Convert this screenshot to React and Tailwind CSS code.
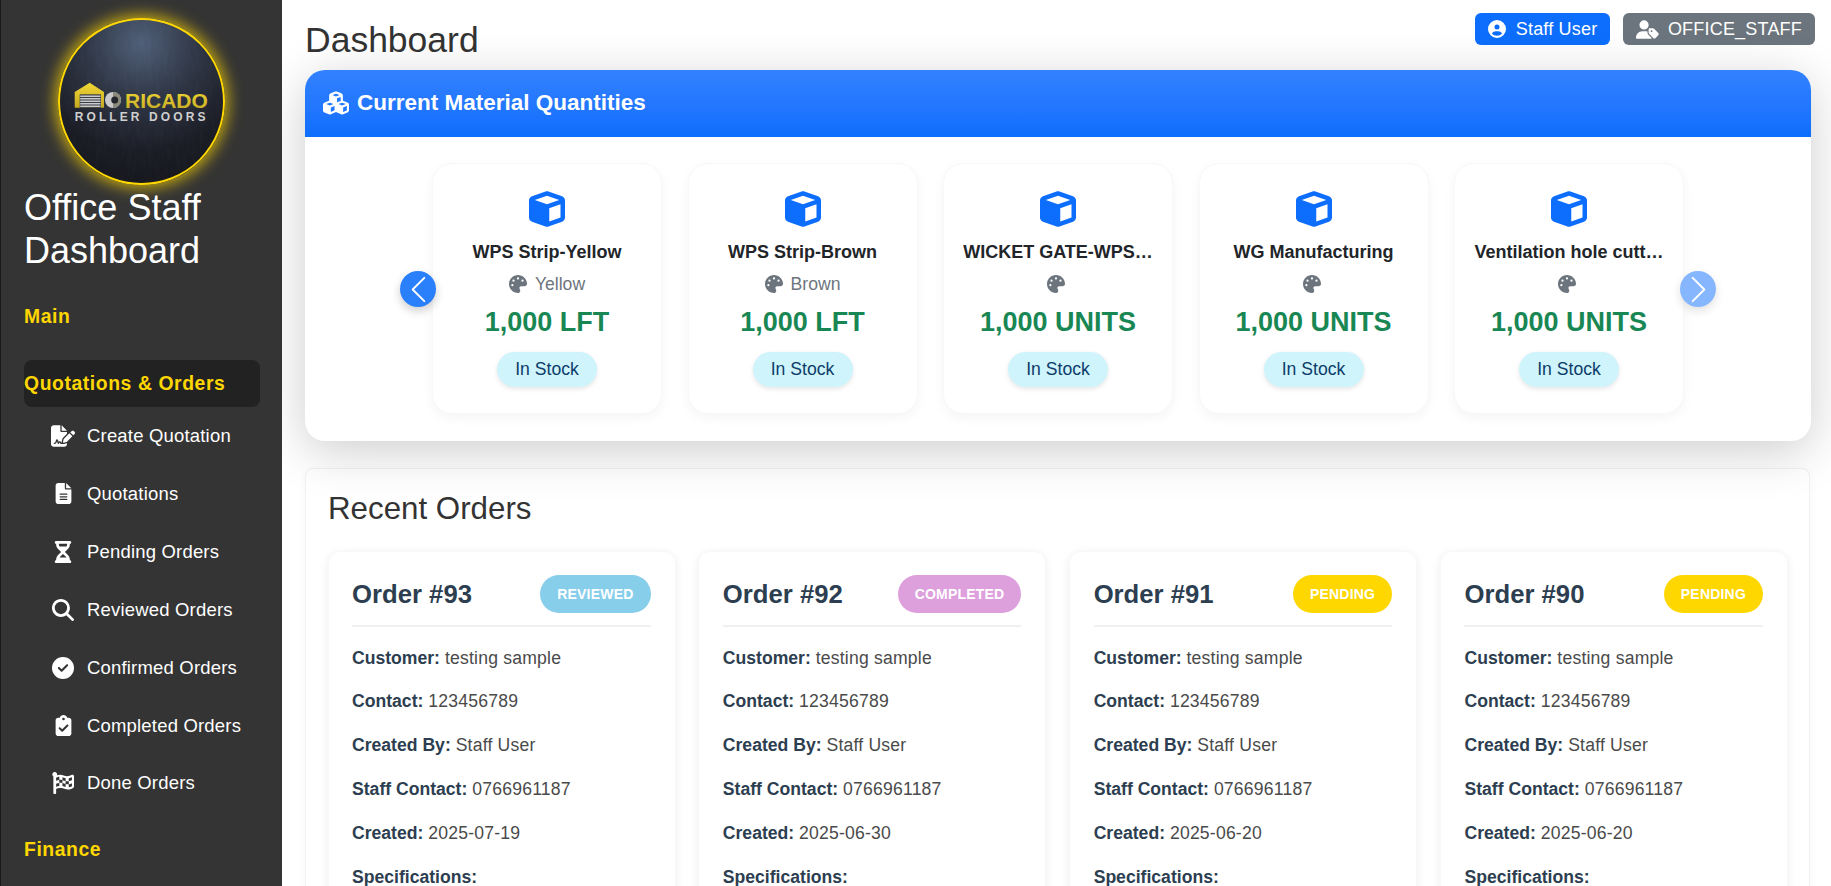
import {
  FaCircleCheck,
  FaCircleUser,
  FaClipboardCheck,
  FaCube,
  FaCubes,
  FaFileLines,
  FaFileSignature,
  FaHourglassHalf,
  FaMagnifyingGlass,
  FaPalette,
  FaUserTag,
} from "react-icons/fa6";
import { FaFlagCheckered } from "react-icons/fa";

const navItems = [
  { label: "Create Quotation", Icon: FaFileSignature, size: "text-[24px]" },
  { label: "Quotations", Icon: FaFileLines, size: "text-[21px]" },
  { label: "Pending Orders", Icon: FaHourglassHalf, size: "text-[22px]" },
  { label: "Reviewed Orders", Icon: FaMagnifyingGlass, size: "text-[22px]" },
  { label: "Confirmed Orders", Icon: FaCircleCheck, size: "text-[22px]" },
  { label: "Completed Orders", Icon: FaClipboardCheck, size: "text-[21px]" },
  { label: "Done Orders", Icon: FaFlagCheckered, size: "text-[22px]" },
];

const materials = [
  { name: "WPS Strip-Yellow", color: "Yellow", qty: "1,000 LFT" },
  { name: "WPS Strip-Brown", color: "Brown", qty: "1,000 LFT" },
  { name: "WICKET GATE-WPS…", color: "", qty: "1,000 UNITS" },
  { name: "WG Manufacturing", color: "", qty: "1,000 UNITS" },
  { name: "Ventilation hole cutt…", color: "", qty: "1,000 UNITS" },
];

const orders = [
  { id: 93, status: "REVIEWED", badge: "bg-[#87ceeb]", created: "2025-07-19" },
  { id: 92, status: "COMPLETED", badge: "bg-[#dda0dd]", created: "2025-06-30" },
  { id: 91, status: "PENDING", badge: "bg-[#ffd700]", created: "2025-06-20" },
  { id: 90, status: "PENDING", badge: "bg-[#ffd700]", created: "2025-06-20" },
];

// logo, drawn in page coordinates of the circle
const Logo = () => (
  <svg viewBox="58 18 167 167" className="w-full h-full block">
    <defs>
      <radialGradient id="logoBg" cx="50%" cy="15%" r="85%">
        <stop offset="0%" stopColor="#4f5f78" />
        <stop offset="40%" stopColor="#2f3645" />
        <stop offset="75%" stopColor="#1c1e27" />
        <stop offset="100%" stopColor="#16171d" />
      </radialGradient>
      <linearGradient id="logoGold" x1="0" y1="0" x2="0" y2="1">
        <stop offset="0%" stopColor="#f2d835" />
        <stop offset="100%" stopColor="#c4a823" />
      </linearGradient>
      <filter id="logoGrain">
        <feTurbulence type="fractalNoise" baseFrequency="0.25 0.07" numOctaves="3" seed="4" />
        <feColorMatrix values="0 0 0 0 1  0 0 0 0 1  0 0 0 0 1  0 0 0 0.3 -0.08" />
      </filter>
      <clipPath id="logoClip">
        <circle cx="141.5" cy="101.5" r="83.5" />
      </clipPath>
    </defs>
    <g clipPath="url(#logoClip)">
      <rect x="58" y="18" width="167" height="167" fill="url(#logoBg)" />
      <rect x="58" y="18" width="167" height="167" filter="url(#logoGrain)" opacity="0.12" />
    </g>
    {/* garage */}
    <path d="M74.7 92 L89.7 82.7 L104 92 L104 107.8 L74.7 107.8 Z" fill="url(#logoGold)" />
    <rect x="79.7" y="94.3" width="21.3" height="13.5" fill="#3a3d44" />
    {[95.5, 98, 100.5, 103, 105.5].map((y) => (
      <rect key={y} x="80.2" y={y} width="20.3" height="1.5" fill="#c9cbce" />
    ))}
    {/* wheel */}
    <circle cx="113" cy="100" r="8" fill="#c8c9c8" />
    <path d="M113 92 A8 8 0 0 1 113 108 Z" fill="#8b8a7a" />
    <circle cx="114.7" cy="100" r="3.5" fill="#24262d" />
    <text x="125" y="107.8" fill="url(#logoGold)" fontSize="21" fontWeight="700" fontFamily="'Liberation Sans', sans-serif">
      RICADO
    </text>
    <text x="74.7" y="121.3" fill="#cfcfcf" fontSize="12" fontWeight="700" fontFamily="'Liberation Sans', sans-serif" letterSpacing="3.1">
      ROLLER DOORS
    </text>
  </svg>
);

const PrevIcon = () => (
  <svg viewBox="0 0 16 16" fill="#fff" className="w-[31px] h-[31px]">
    <path d="M11.354 1.646a.5.5 0 0 1 0 .708L5.707 8l5.647 5.646a.5.5 0 0 1-.708.708l-6-6a.5.5 0 0 1 0-.708l6-6a.5.5 0 0 1 .708 0z" />
  </svg>
);

const NextIcon = () => (
  <svg viewBox="0 0 16 16" fill="#fff" className="w-[31px] h-[31px]">
    <path d="M4.646 1.646a.5.5 0 0 1 .708 0l6 6a.5.5 0 0 1 0 .708l-6 6a.5.5 0 0 1-.708-.708L10.293 8 4.646 2.354a.5.5 0 0 1 0-.708z" />
  </svg>
);

const Sidebar = () => (
  <aside className="w-[282px] shrink-0 h-full overflow-hidden bg-[#343434] border-l border-[#1a1a1a] pl-[23px] pr-[22px] pt-[18px] relative z-20">
    <div className="w-[167px] h-[167px] ml-[34px] rounded-full outline-2 -outline-offset-2 outline-[#ffd700] shadow-[0_0_15px_3px_rgba(255,215,0,0.75)]">
      <Logo />
    </div>
    <h2 className="text-white text-[36px] leading-[43px] mt-px">Office Staff Dashboard</h2>

    <div className="h-[46px] mt-[22px] flex items-center text-[#ffd700] font-bold text-[19.36px] tracking-[0.58px]">Main</div>
    <div className="h-[47px] mt-[20px] flex items-center rounded-lg bg-[#222222] text-[#ffd700] font-bold text-[19.36px] tracking-[0.58px]">
      Quotations &amp; Orders
    </div>
    <ul>
      {navItems.map(({ label, Icon, size }) => (
        <li key={label} className="h-[57.9px] flex items-center pl-[25px] text-white text-[18.48px] tracking-[0.2px]">
          <span className="w-[28px] flex justify-center mr-[10px]">
            <Icon className={size} />
          </span>
          {label}
        </li>
      ))}
    </ul>
    <div className="h-[46px] mt-[14px] flex items-center text-[#ffd700] font-bold text-[19.36px] tracking-[0.58px]">Finance</div>
  </aside>
);

const MaterialCard = ({ name, color, qty }) => (
  <div className="w-[230px] shrink-0 h-[251px] rounded-[20px] bg-white border border-[#f8f8f8] shadow-[0_4px_12px_rgba(0,0,0,0.045)] pt-[27px] flex flex-col items-center">
    <FaCube className="text-[36px] text-[#0d6efd]" />
    <div className="mt-[12px] text-[#212529] font-bold text-[18px] leading-[26.4px] whitespace-nowrap">{name}</div>
    <div className="mt-[6px] h-[26px] flex items-center text-[#6c757d] text-[17.6px]">
      <FaPalette className={`text-[18px] ${color ? "mr-2" : "mr-1"}`} />
      {color}
    </div>
    <div className="mt-[9px] mb-[-1px] text-[#198754] font-bold text-[27px] leading-[32px] whitespace-nowrap">{qty}</div>
    <div className="mt-[15px] w-[100px] h-[35px] pb-[2px] rounded-full bg-[#cff4fc] text-[#0c3c6a] text-[17.6px] flex items-center justify-center shadow-[0_2px_5px_rgba(0,0,0,0.1)]">
      In Stock
    </div>
  </div>
);

const OrderLine = ({ label, value }) => (
  <p className="mb-[17.4px] text-[17.6px] leading-[26.4px] text-[#4a4a4a] whitespace-nowrap">
    <strong className="text-[#2c3e50]">{label}</strong> <span className="tracking-[0.2px]">{value}</span>
  </p>
);

const OrderCard = ({ id, status, badge, created }) => (
  <div className="rounded-xl bg-white border border-[#f8f8f8] shadow-[0_2px_10px_rgba(0,0,0,0.07)] pl-[23.5px] pr-[24px] pt-[23px] h-[400px]">
    <div className="flex items-center justify-between pb-[11px] border-b-2 border-[#f0f0f0] mb-[18px]">
      <span className="text-[#2c3e50] font-bold text-[25.7px]">Order #{id}</span>
      <span className={`h-[38px] px-[17px] rounded-full flex items-center text-white font-bold text-[14px] tracking-[0.2px] ${badge}`}>
        {status}
      </span>
    </div>
    <OrderLine label="Customer:" value="testing sample" />
    <OrderLine label="Contact:" value="123456789" />
    <OrderLine label="Created By:" value="Staff User" />
    <OrderLine label="Staff Contact:" value="0766961187" />
    <OrderLine label="Created:" value={created} />
    <OrderLine label="Specifications:" value="" />
  </div>
);

export default function App() {
  return (
    <div className="flex h-screen overflow-hidden bg-white font-['Liberation_Sans',Arial,sans-serif]">
      <Sidebar />

      <main className="flex-1 min-w-0 h-full overflow-hidden pl-[23px] pr-[16px]">
        {/* Top bar */}
        <div className="flex items-start justify-between h-[70px]">
          <h1 className="mt-[19px] text-[35.5px] leading-[42px] text-[#333333]">Dashboard</h1>
          <div className="mt-[13px] flex gap-[13px] text-white text-[18px] tracking-[0.2px]">
            <span className="h-[32px] px-[12.5px] rounded-md bg-[#0d6efd] flex items-center gap-[10px]">
              <FaCircleUser className="text-[18px]" />
              Staff User
            </span>
            <span className="h-[32px] px-[13px] rounded-md bg-[#6c757d] flex items-center gap-[9px]">
              <FaUserTag className="text-[23px]" />
              OFFICE_STAFF
            </span>
          </div>
        </div>

        {/* Current material quantities */}
        <section className="relative z-10 mr-1 h-[371px] rounded-[20px] bg-white shadow-[0_10px_50px_rgba(0,0,0,0.2)]">
          <div className="h-[67px] pb-[2px] rounded-t-[20px] bg-gradient-to-b from-[#3381ff] to-[#0d6efd] pl-[18px] flex items-center gap-[8px] text-white font-bold text-[22.5px]">
            <FaCubes className="text-[26px]" />
            Current Material Quantities
          </div>
          <div className="relative pt-[26px] flex justify-center gap-[25.5px]">
            {materials.map((m) => (
              <MaterialCard key={m.name} {...m} />
            ))}
            <button className="absolute left-[95px] top-[134px] w-[36px] h-[36px] rounded-full bg-[#2a7ffb] flex items-center justify-center shadow-[0_4px_10px_rgba(0,0,0,0.2)]">
              <PrevIcon />
            </button>
            <button className="absolute left-[1375px] top-[134px] w-[36px] h-[36px] rounded-full bg-[#86b7fe] flex items-center justify-center shadow-[0_4px_10px_rgba(0,0,0,0.12)]">
              <NextIcon />
            </button>
          </div>
        </section>

        {/* Recent orders */}
        <section className="mt-[27px] mr-[5px] rounded-lg bg-white border border-[#f2f2f2] shadow-[0_2px_8px_rgba(0,0,0,0.04)] pl-[21.5px] pr-[21px] pt-[21px]">
          <h3 className="ml-[0.5px] text-[31.3px] leading-[38px] text-[#333333] mb-[23px]">Recent Orders</h3>
          <div className="grid grid-cols-4 gap-[22.8px]">
            {orders.map((o) => (
              <OrderCard key={o.id} {...o} />
            ))}
          </div>
        </section>
      </main>
    </div>
  );
}
